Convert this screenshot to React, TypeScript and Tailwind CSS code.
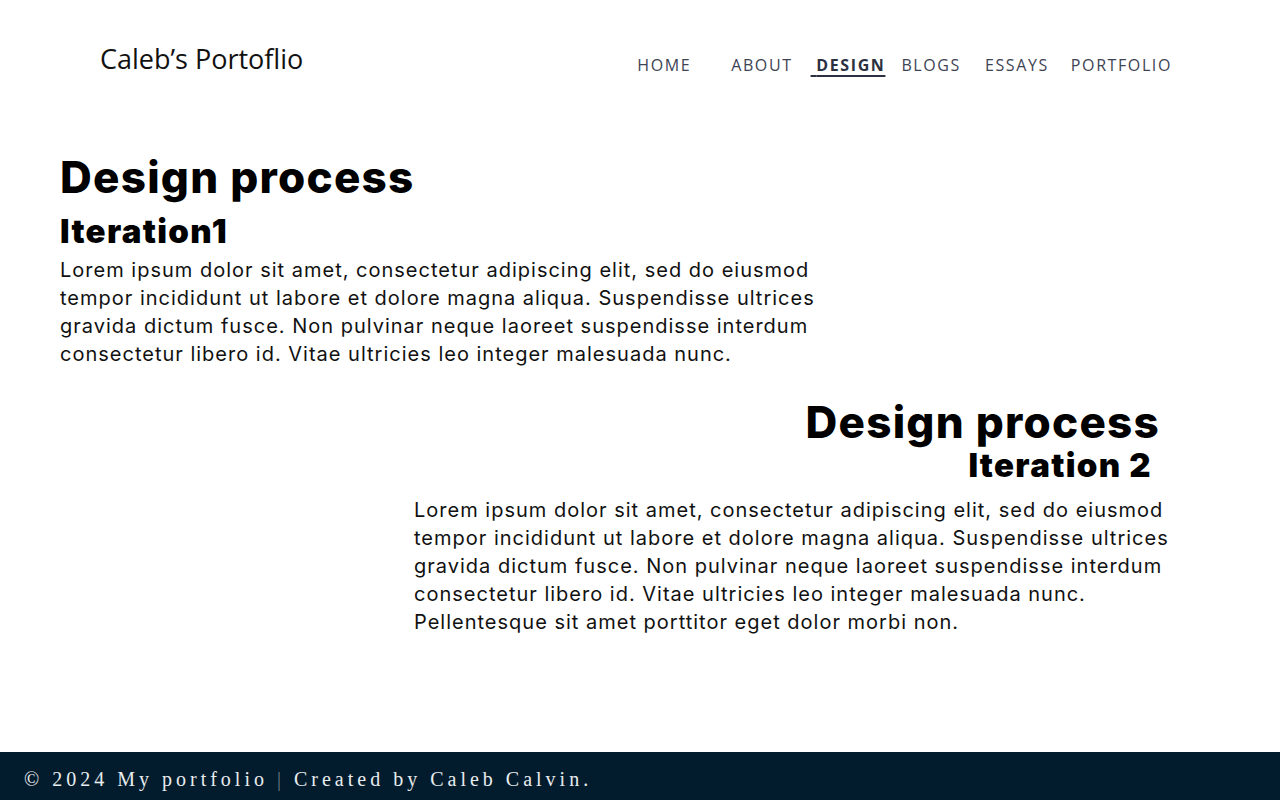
export default function App() {
  const nav = [
    { label: 'HOME', cls: 'ml-0' },
    { label: 'ABOUT', cls: 'ml-[40px]' },
    { label: 'DESIGN', cls: 'ml-[18px]', active: true },
    { label: 'BLOGS', cls: 'ml-[16px]' },
    { label: 'ESSAYS', cls: 'ml-[24px]' },
    { label: 'PORTFOLIO', cls: 'ml-[22px]' },
  ];
  const lines1 = [
    'Lorem ipsum dolor sit amet, consectetur adipiscing elit, sed do eiusmod',
    'tempor incididunt ut labore et dolore magna aliqua. Suspendisse ultrices',
    'gravida dictum fusce. Non pulvinar neque laoreet suspendisse interdum',
    'consectetur libero id. Vitae ultricies leo integer malesuada nunc.',
  ];
  const lines2 = [...lines1, 'Pellentesque sit amet porttitor eget dolor morbi non.'];
  const body = "font-['Inter',sans-serif] text-[20px] leading-[28px] tracking-[0.05em] text-[#111]";
  const h1 = "font-['Inter',sans-serif] font-extrabold text-[44px] leading-[46px] tracking-[0.028em] text-black";
  const h2 = "font-['Inter',sans-serif] font-black text-[33px] leading-[38px] tracking-[0.04em] text-black";

  return (
    <div className="min-h-[800px] flex flex-col bg-white">
      <header className="flex items-start justify-between pl-[100px] pr-[108px] pt-[42px]">
        <div className="font-['Open_Sans',sans-serif] text-[27px] leading-[34px] text-[#111]">Caleb’s Portoflio</div>
        <nav className="flex items-center pt-[11px] font-['Open_Sans',sans-serif] text-[16px] tracking-[0.1em] text-[#3d4354]">
          {nav.map(n => (
            <a
              key={n.label}
              className={`${n.cls} ${n.active ? 'font-bold text-[#2c3142] underline underline-offset-[4px] decoration-[1.5px]' : ''}`}
            >
              {n.active ? '\u00a0' : ''}{n.label}
            </a>
          ))}
        </nav>
      </header>

      <main className="flex-1 pt-[77px]">
        <section className="pl-[60px]">
          <h1 className={h1}>Design process</h1>
          <h2 className={`mt-[12px] ${h2}`}>Iteration1</h2>
          <p className={`mt-[6px] ${body}`}>
            {lines1.map(l => (
              <span key={l} className="block whitespace-nowrap">{l}</span>
            ))}
          </p>
        </section>

        <section className="mt-[31px] flex flex-col items-end pr-[120px]">
          <h1 className={h1}>Design process</h1>
          <h2 className={`mt-[1px] mr-[8px] ${h2}`}>Iteration 2</h2>
        </section>
        <p className={`mt-[12px] ml-[414px] ${body}`}>
          {lines2.map(l => (
            <span key={l} className="block whitespace-nowrap">{l}</span>
          ))}
        </p>
      </main>

      <footer className="h-[48px] bg-[#031c2d] flex items-center pl-[24px] pt-[5px]">
        <span className="font-['Liberation_Serif',serif] text-[20px] tracking-[0.2em] text-[#e8ecef]">
          © 2024 My portfolio <span className="text-[#6b7a88]">|</span> Created by Caleb Calvin.
        </span>
      </footer>
    </div>
  );
}
